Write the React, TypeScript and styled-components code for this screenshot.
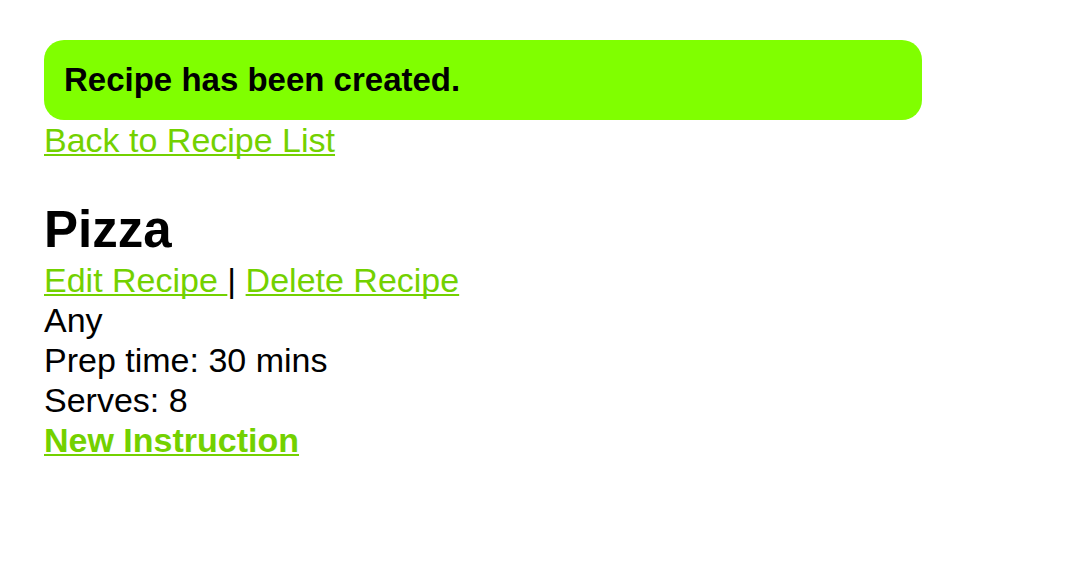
import React from "react";
import styled, { createGlobalStyle } from "styled-components";

const GlobalStyle = createGlobalStyle`
  *, *::before, *::after { box-sizing: border-box; }
  body {
    margin: 0;
    background: #fff;
    color: #000;
    font-family: "Liberation Sans", Helvetica, Arial, sans-serif;
    font-size: 34px;
    line-height: 40px;
  }
`;

const Page = styled.main`
  padding: 40px 168px 40px 44px;
`;

const Flash = styled.div`
  padding: 20px;
  border-radius: 20px;
  background: #80ff00;
  font-size: 33px;
  font-weight: 700;
`;

const Link = styled.a<{ $strong?: boolean }>`
  color: #73d100;
  font-weight: ${(p) => (p.$strong ? 700 : 400)};
  text-decoration: underline;
  text-decoration-thickness: 2px;
  text-decoration-skip-ink: none;
  text-underline-offset: 2px;
  white-space: pre;
`;

const Title = styled.h1`
  margin: 40px 0 0;
  font-size: 51px;
  line-height: 60px;
  font-weight: 700;
`;

const Line = styled.p`
  margin: 0;
`;

export default function App() {
  return (
    <>
      <GlobalStyle />
      <Page>
        <Flash role="status">Recipe has been created.</Flash>
        <nav>
          <Link href="#recipes">Back to Recipe List</Link>
        </nav>
        <Title>Pizza</Title>
        <Line>
          <Link href="#edit">{"Edit Recipe "}</Link>| <Link href="#delete">Delete Recipe</Link>
        </Line>
        <Line>Any</Line>
        <Line>Prep time: 30 mins</Line>
        <Line>Serves: 8</Line>
        <Line>
          <Link href="#new-instruction" $strong>New Instruction</Link>
        </Line>
      </Page>
    </>
  );
}
